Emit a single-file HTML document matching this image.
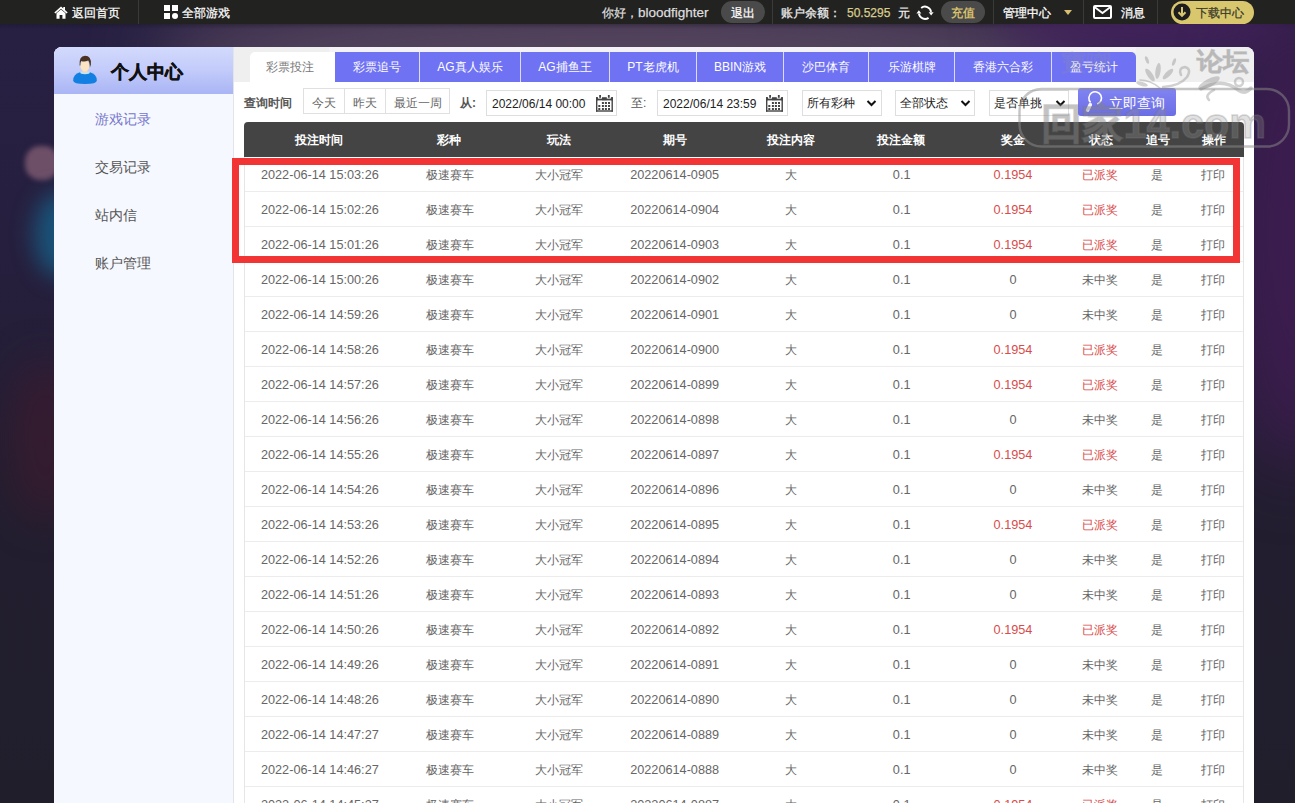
<!DOCTYPE html>
<html><head><meta charset="utf-8">
<style>
*{margin:0;padding:0;box-sizing:border-box}
html,body{width:1295px;height:803px;overflow:hidden}
body{position:relative;font-family:"Liberation Sans",sans-serif;font-size:13px;color:#666;
background:#221e2e;}
.bg{position:absolute;left:0;top:0;width:1295px;height:803px;overflow:hidden;background:linear-gradient(180deg,#272043 0px,#261f3e 250px,#221e30 480px,#211e2c 803px)}
.bg div{position:absolute;border-radius:50%}
.top{position:absolute;left:0;top:0;width:1295px;height:24px;background:#222221;color:#fff;font-size:12px;line-height:26px;white-space:nowrap}
.top span,.top div{position:absolute;-webkit-text-stroke:0.25px currentColor}
.vd{position:absolute;top:0;width:1px;height:24px;background:#3a3a3a}
.pill{position:absolute;top:1px;height:22px;border-radius:11px;background:#4a4a4a;text-align:center;line-height:24px}
.panel{position:absolute;left:54px;top:47px;width:1200px;height:820px;background:#fff;border-radius:8px 8px 0 0;overflow:hidden}
.side{position:absolute;left:0;top:0;width:180px;height:820px;background:#f5f8fe;border-right:1px solid #e2e4ea}
.shead{position:absolute;left:0;top:0;width:179px;height:47px;background:linear-gradient(180deg,#d3dafd 0%,#c2cbfa 50%,#a9b5f5 100%)}
.shead .t{position:absolute;left:57px;top:14px;font-size:18px;font-weight:bold;color:#111;line-height:22px;letter-spacing:0px;-webkit-text-stroke:0.5px #111}
.menu{position:absolute;left:41px;font-size:14px;color:#555;line-height:20px}
.strip{position:absolute;left:180px;top:0;width:1020px;height:35px;background:#efefef}
.tab{position:absolute;top:5px;height:30px;background:#7072f4;color:#fff;text-align:center;line-height:30px;font-size:12px;border-right:1px solid #dcdcf5}
.tab.act{background:#fff;color:#777;border-radius:6px 6px 0 0;border:none}
.q{position:absolute;font-size:12px;line-height:28px}
.btn{position:absolute;top:41px;height:26px;border:1px solid #e0e0e0;background:#fff;color:#666;text-align:center;line-height:29px;font-size:12px}
.inp{position:absolute;top:43px;height:26px;border:1px solid #dedede;background:#fff;color:#222;line-height:26px;padding-left:5px;font-size:12px}
.sel{position:absolute;top:43px;height:26px;border:1px solid #dedede;background:#fff;color:#222;line-height:25px;padding-left:4px;font-size:12px}
.thead{position:absolute;left:190px;top:75px;width:1000px;height:35px;background:#444;border-radius:4px 4px 0 0;color:#fff;font-weight:bold;line-height:36px;font-size:12px}
.tbody{position:absolute;left:190px;top:110px;width:1000px;border-left:1px solid #e6e6e6;border-right:1px solid #e6e6e6}
.tr{height:35px;border-bottom:1px solid #ececec;line-height:36px;display:flex;font-size:12px}
.tr .c1,.tr .c4,.tr .c6,.tr .c7{font-size:12.7px}
.tr div,.thead div{text-align:center;white-space:nowrap}
.thead{display:flex}
.c1{width:150px}.c2{width:110px}.c3{width:110px}.c4{width:121px}.c5{width:111px}.c6{width:110px}.c7{width:113px}.c8{width:63px}.c9{width:51px}.c10{width:61px}
.r{color:#d84c4c}
.tr .c5,.tr .c6,.tr .c7{padding-left:2px}
.redbox{position:absolute;left:232px;top:158px;width:1008px;height:105px;border:7px solid #f23434}
.wm{position:absolute;left:0;top:0;width:1295px;height:803px;pointer-events:none}
</style></head><body>
<div class="bg">
  <div style="left:150px;top:-5px;width:950px;height:120px;background:rgba(105,85,105,0.72);filter:blur(35px)"></div><div style="left:0;top:24px;width:1295px;height:5px;border-radius:0;background:linear-gradient(180deg,rgba(20,18,28,0.35),rgba(20,18,28,0))"></div>
  <div style="left:1000px;top:-30px;width:300px;height:100px;background:rgba(70,35,95,0.8);filter:blur(25px)"></div><div style="left:1235px;top:10px;width:120px;height:460px;background:rgba(64,28,82,0.9);filter:blur(35px)"></div>
  <div style="left:25px;top:146px;width:34px;height:34px;background:#6e4f68;filter:blur(2.5px);border-radius:45%"></div>
  <div style="left:34px;top:192px;width:50px;height:85px;background:rgba(22,100,140,0.75);filter:blur(11px)"></div>
  <div style="left:10px;top:360px;width:70px;height:160px;background:rgba(70,25,45,0.55);filter:blur(20px)"></div>
</div>
<div class="top">
  <svg style="position:absolute;left:54px;top:6px" width="14" height="13" viewBox="0 0 14 13"><path d="M7 0.5 L0.3 6.5 L1.5 7.6 L7 2.8 L12.5 7.6 L13.7 6.5 L11 4.1 V1 H9.3 V2.6 Z" fill="#fff"/><path d="M2.5 7.3 L7 3.4 L11.5 7.3 V12.7 H8.4 V9 H5.6 V12.7 H2.5 Z" fill="#fff"/></svg>
  <span style="left:72px">返回首页</span>
  <div class="vd" style="left:138px"></div>
  <svg style="position:absolute;left:164px;top:5px" width="14" height="14" viewBox="0 0 14 14"><rect x="0" y="0" width="6" height="6" fill="#fff"/><rect x="8" y="0" width="6" height="6" fill="#fff"/><rect x="0" y="8" width="6" height="6" fill="#fff"/><circle cx="11" cy="11" r="3" fill="#fff"/></svg>
  <span style="left:182px">全部游戏</span>
  <span style="left:602px;color:#ddd">你好，<span style="position:static;font-size:13.5px">bloodfighter</span></span>
  <div class="pill" style="left:721px;width:44px;color:#fff">退出</div>
  <div class="vd" style="left:772px"></div>
  <span style="left:781px;color:#eee">账户余额：</span>
  <span style="left:847px;color:#d8cc8c">50.5295</span>
  <span style="left:898px;color:#eee">元</span>
  <svg style="position:absolute;left:915px;top:4px" width="20" height="18" viewBox="0 0 20 18"><path d="M6.18 3.91 A6.2 6.2 0 0 1 16.1 7.9" stroke="#fff" stroke-width="1.9" fill="none"/><path d="M13.7 8.3 L18.6 8.3 L16.15 11.6 Z" fill="#fff"/><path d="M13.56 13.88 A6.2 6.2 0 0 1 3.9 9.7" stroke="#fff" stroke-width="1.9" fill="none"/><path d="M1.45 9.5 L6.35 9.5 L3.9 6.2 Z" fill="#fff"/></svg>
  <div class="pill" style="left:941px;width:44px;color:#e2cf72">充值</div>
  <div class="vd" style="left:993px"></div>
  <span style="left:1003px">管理中心</span>
  <svg style="position:absolute;left:1064px;top:10px" width="8" height="5" viewBox="0 0 8 5"><path d="M0 0 H8 L4 5 Z" fill="#d8c070"/></svg>
  <div class="vd" style="left:1083px"></div>
  <svg style="position:absolute;left:1093px;top:5px" width="19" height="14" viewBox="0 0 19 14"><rect x="1" y="1" width="17" height="12" rx="1" stroke="#fff" stroke-width="2" fill="none"/><path d="M1.5 2 L9.5 8 L17.5 2" stroke="#fff" stroke-width="1.8" fill="none"/></svg>
  <span style="left:1121px">消息</span>
  <div class="vd" style="left:1157px"></div>
  <div class="pill" style="left:1171px;width:83px;background:#d9c76e;top:1px;height:23px;border-radius:12px"></div>
  <svg style="position:absolute;left:1173px;top:3px" width="18" height="18" viewBox="0 0 18 18"><circle cx="9" cy="9" r="8.5" fill="#1e1e1e"/><path d="M9 4 V12.5 M5.5 9.2 L9 12.8 L12.5 9.2" stroke="#d9c76e" stroke-width="2" fill="none"/></svg>
  <span style="left:1196px;color:#3a3a2a">下载中心</span>
</div>

<div class="panel">
  <div class="side">
    <div class="shead">
      <svg style="position:absolute;left:18px;top:8px" width="26" height="30" viewBox="0 0 26 30"><path d="M1.2 25.5 Q1.2 19 8 17.2 L18 17.2 Q24.8 19 24.8 25.5 Q24.8 29 13 29 Q1.2 29 1.2 25.5 Z" fill="#1280e2"/><ellipse cx="13" cy="17.6" rx="4.8" ry="1.6" fill="#bfe6f4"/><rect x="10.6" y="12.5" width="4.8" height="5" fill="#f6d6b0"/><ellipse cx="12.9" cy="11" rx="4.5" ry="5.4" fill="#fbe4c2"/><path d="M7.6 10.5 Q6.8 1 13 0.8 Q19.6 1 18.9 9.5 L17.9 12.5 Q17.6 6.8 16.2 5.6 Q12.5 7.4 9.2 5.9 Q8.3 7.2 8.3 10.5 Z" fill="#4a3322"/></svg>
      <div class="t">个人中心</div>
    </div>
    <div class="menu" style="top:62px;color:#7676cc">游戏记录</div>
    <div class="menu" style="top:110px">交易记录</div>
    <div class="menu" style="top:158px">站内信</div>
    <div class="menu" style="top:206px">账户管理</div>
  </div>
  <div class="strip"></div>
  <div style="position:absolute;left:275px;top:0;width:807px;height:5px;background:#f4f2f7"></div>
  <div class="tab act" style="left:196px;width:85px;padding-right:6px;border-radius:5px 0 0 0">彩票投注</div>
  <div class="tab" style="left:281px;width:85px">彩票追号</div>
  <div class="tab" style="left:366px;width:101px">AG真人娱乐</div>
  <div class="tab" style="left:467px;width:89px">AG捕鱼王</div>
  <div class="tab" style="left:556px;width:87px">PT老虎机</div>
  <div class="tab" style="left:643px;width:87px">BBIN游戏</div>
  <div class="tab" style="left:730px;width:85px">沙巴体育</div>
  <div class="tab" style="left:815px;width:86px">乐游棋牌</div>
  <div class="tab" style="left:901px;width:97px">香港六合彩</div>
  <div class="tab" style="left:998px;width:84px;border-right:none;border-radius:0 5px 0 0">盈亏统计</div>

  <div class="q" style="left:190px;top:42px;font-weight:bold;color:#555">查询时间</div>
  <div class="btn" style="left:249px;width:42px">今天</div>
  <div class="btn" style="left:290px;width:42px">昨天</div>
  <div class="btn" style="left:331px;width:65px">最近一周</div>
  <div class="q" style="left:406px;top:42px;font-weight:bold;color:#555">从:</div>
  <div class="inp" style="left:432px;width:131px">2022/06/14 00:00</div>
  <svg style="position:absolute;left:542px;top:48px" width="17" height="17" viewBox="0 0 17 17"><g fill="#444"><rect x="3.2" y="0" width="1.8" height="2.8"/><rect x="11.9" y="0" width="1.8" height="2.8"/><rect x="0" y="2.2" width="2" height="3"/><rect x="6" y="2.2" width="4.8" height="3"/><rect x="14.9" y="2.2" width="2" height="3"/><rect x="0" y="3.6" width="16.9" height="1.8"/><rect x="0" y="2.2" width="1.4" height="14.5"/><rect x="15.5" y="2.2" width="1.4" height="14.5"/><rect x="0" y="15.3" width="16.9" height="1.4"/><rect x="5.9" y="7" width="2" height="2"/><rect x="8.9" y="7" width="2" height="2"/><rect x="12" y="7" width="2" height="2"/><rect x="2.3" y="10" width="2" height="2"/><rect x="5.9" y="10" width="2" height="2"/><rect x="8.9" y="10" width="2" height="2"/><rect x="12" y="10" width="2" height="2"/><rect x="2.3" y="13" width="2" height="2"/><rect x="5.9" y="13" width="2" height="2"/><rect x="8.9" y="13" width="2" height="2"/><rect x="12" y="13" width="2" height="2"/></g></svg>
  <div class="q" style="left:577px;top:42px;color:#555">至:</div>
  <div class="inp" style="left:603px;width:131px">2022/06/14 23:59</div>
  <svg style="position:absolute;left:712px;top:48px" width="17" height="17" viewBox="0 0 17 17"><g fill="#444"><rect x="3.2" y="0" width="1.8" height="2.8"/><rect x="11.9" y="0" width="1.8" height="2.8"/><rect x="0" y="2.2" width="2" height="3"/><rect x="6" y="2.2" width="4.8" height="3"/><rect x="14.9" y="2.2" width="2" height="3"/><rect x="0" y="3.6" width="16.9" height="1.8"/><rect x="0" y="2.2" width="1.4" height="14.5"/><rect x="15.5" y="2.2" width="1.4" height="14.5"/><rect x="0" y="15.3" width="16.9" height="1.4"/><rect x="5.9" y="7" width="2" height="2"/><rect x="8.9" y="7" width="2" height="2"/><rect x="12" y="7" width="2" height="2"/><rect x="2.3" y="10" width="2" height="2"/><rect x="5.9" y="10" width="2" height="2"/><rect x="8.9" y="10" width="2" height="2"/><rect x="12" y="10" width="2" height="2"/><rect x="2.3" y="13" width="2" height="2"/><rect x="5.9" y="13" width="2" height="2"/><rect x="8.9" y="13" width="2" height="2"/><rect x="12" y="13" width="2" height="2"/></g></svg>
  <div class="sel" style="left:748px;width:80px">所有彩种</div>
  <svg style="position:absolute;left:812px;top:53px" width="11" height="7" viewBox="0 0 11 7"><path d="M1.5 1 L5.5 5 L9.5 1" stroke="#111" stroke-width="2" fill="none"/></svg>
  <div class="sel" style="left:841px;width:80px">全部状态</div>
  <svg style="position:absolute;left:906px;top:53px" width="11" height="7" viewBox="0 0 11 7"><path d="M1.5 1 L5.5 5 L9.5 1" stroke="#111" stroke-width="2" fill="none"/></svg>
  <div class="sel" style="left:935px;width:80px">是否单挑</div>
  <svg style="position:absolute;left:1001px;top:53px" width="11" height="7" viewBox="0 0 11 7"><path d="M1.5 1 L5.5 5 L9.5 1" stroke="#111" stroke-width="2" fill="none"/></svg>
  <div style="position:absolute;left:1024px;top:41px;width:98px;height:28px;border-radius:3px;background:linear-gradient(180deg,#8184f3,#6b6de4);color:#fff;font-size:14px;line-height:31px">
    <svg style="position:absolute;left:0;top:0" width="30" height="28" viewBox="0 0 30 28"><path d="M12.6 14.4 A6.3 6.3 0 1 1 19.2 16" stroke="#fff" stroke-width="1.6" fill="none"/><path d="M12.3 16.6 L9.6 22.2" stroke="#f4f4fa" stroke-width="3.6" stroke-linecap="round"/></svg>
    <span style="position:absolute;left:31px">立即查询</span>
  </div>

  <div class="thead"><div class="c1">投注时间</div><div class="c2">彩种</div><div class="c3">玩法</div><div class="c4">期号</div><div class="c5">投注内容</div><div class="c6">投注金额</div><div class="c7">奖金</div><div class="c8">状态</div><div class="c9">追号</div><div class="c10">操作</div></div>
  <div class="tbody">
<div class="tr"><div class="c1">2022-06-14 15:03:26</div><div class="c2">极速赛车</div><div class="c3">大小冠军</div><div class="c4">20220614-0905</div><div class="c5">大</div><div class="c6">0.1</div><div class="c7"><span class="r">0.1954</span></div><div class="c8"><span class="r">已派奖</span></div><div class="c9">是</div><div class="c10">打印</div></div>
<div class="tr"><div class="c1">2022-06-14 15:02:26</div><div class="c2">极速赛车</div><div class="c3">大小冠军</div><div class="c4">20220614-0904</div><div class="c5">大</div><div class="c6">0.1</div><div class="c7"><span class="r">0.1954</span></div><div class="c8"><span class="r">已派奖</span></div><div class="c9">是</div><div class="c10">打印</div></div>
<div class="tr"><div class="c1">2022-06-14 15:01:26</div><div class="c2">极速赛车</div><div class="c3">大小冠军</div><div class="c4">20220614-0903</div><div class="c5">大</div><div class="c6">0.1</div><div class="c7"><span class="r">0.1954</span></div><div class="c8"><span class="r">已派奖</span></div><div class="c9">是</div><div class="c10">打印</div></div>
<div class="tr"><div class="c1">2022-06-14 15:00:26</div><div class="c2">极速赛车</div><div class="c3">大小冠军</div><div class="c4">20220614-0902</div><div class="c5">大</div><div class="c6">0.1</div><div class="c7">0</div><div class="c8">未中奖</div><div class="c9">是</div><div class="c10">打印</div></div>
<div class="tr"><div class="c1">2022-06-14 14:59:26</div><div class="c2">极速赛车</div><div class="c3">大小冠军</div><div class="c4">20220614-0901</div><div class="c5">大</div><div class="c6">0.1</div><div class="c7">0</div><div class="c8">未中奖</div><div class="c9">是</div><div class="c10">打印</div></div>
<div class="tr"><div class="c1">2022-06-14 14:58:26</div><div class="c2">极速赛车</div><div class="c3">大小冠军</div><div class="c4">20220614-0900</div><div class="c5">大</div><div class="c6">0.1</div><div class="c7"><span class="r">0.1954</span></div><div class="c8"><span class="r">已派奖</span></div><div class="c9">是</div><div class="c10">打印</div></div>
<div class="tr"><div class="c1">2022-06-14 14:57:26</div><div class="c2">极速赛车</div><div class="c3">大小冠军</div><div class="c4">20220614-0899</div><div class="c5">大</div><div class="c6">0.1</div><div class="c7"><span class="r">0.1954</span></div><div class="c8"><span class="r">已派奖</span></div><div class="c9">是</div><div class="c10">打印</div></div>
<div class="tr"><div class="c1">2022-06-14 14:56:26</div><div class="c2">极速赛车</div><div class="c3">大小冠军</div><div class="c4">20220614-0898</div><div class="c5">大</div><div class="c6">0.1</div><div class="c7">0</div><div class="c8">未中奖</div><div class="c9">是</div><div class="c10">打印</div></div>
<div class="tr"><div class="c1">2022-06-14 14:55:26</div><div class="c2">极速赛车</div><div class="c3">大小冠军</div><div class="c4">20220614-0897</div><div class="c5">大</div><div class="c6">0.1</div><div class="c7"><span class="r">0.1954</span></div><div class="c8"><span class="r">已派奖</span></div><div class="c9">是</div><div class="c10">打印</div></div>
<div class="tr"><div class="c1">2022-06-14 14:54:26</div><div class="c2">极速赛车</div><div class="c3">大小冠军</div><div class="c4">20220614-0896</div><div class="c5">大</div><div class="c6">0.1</div><div class="c7">0</div><div class="c8">未中奖</div><div class="c9">是</div><div class="c10">打印</div></div>
<div class="tr"><div class="c1">2022-06-14 14:53:26</div><div class="c2">极速赛车</div><div class="c3">大小冠军</div><div class="c4">20220614-0895</div><div class="c5">大</div><div class="c6">0.1</div><div class="c7"><span class="r">0.1954</span></div><div class="c8"><span class="r">已派奖</span></div><div class="c9">是</div><div class="c10">打印</div></div>
<div class="tr"><div class="c1">2022-06-14 14:52:26</div><div class="c2">极速赛车</div><div class="c3">大小冠军</div><div class="c4">20220614-0894</div><div class="c5">大</div><div class="c6">0.1</div><div class="c7">0</div><div class="c8">未中奖</div><div class="c9">是</div><div class="c10">打印</div></div>
<div class="tr"><div class="c1">2022-06-14 14:51:26</div><div class="c2">极速赛车</div><div class="c3">大小冠军</div><div class="c4">20220614-0893</div><div class="c5">大</div><div class="c6">0.1</div><div class="c7">0</div><div class="c8">未中奖</div><div class="c9">是</div><div class="c10">打印</div></div>
<div class="tr"><div class="c1">2022-06-14 14:50:26</div><div class="c2">极速赛车</div><div class="c3">大小冠军</div><div class="c4">20220614-0892</div><div class="c5">大</div><div class="c6">0.1</div><div class="c7"><span class="r">0.1954</span></div><div class="c8"><span class="r">已派奖</span></div><div class="c9">是</div><div class="c10">打印</div></div>
<div class="tr"><div class="c1">2022-06-14 14:49:26</div><div class="c2">极速赛车</div><div class="c3">大小冠军</div><div class="c4">20220614-0891</div><div class="c5">大</div><div class="c6">0.1</div><div class="c7">0</div><div class="c8">未中奖</div><div class="c9">是</div><div class="c10">打印</div></div>
<div class="tr"><div class="c1">2022-06-14 14:48:26</div><div class="c2">极速赛车</div><div class="c3">大小冠军</div><div class="c4">20220614-0890</div><div class="c5">大</div><div class="c6">0.1</div><div class="c7">0</div><div class="c8">未中奖</div><div class="c9">是</div><div class="c10">打印</div></div>
<div class="tr"><div class="c1">2022-06-14 14:47:27</div><div class="c2">极速赛车</div><div class="c3">大小冠军</div><div class="c4">20220614-0889</div><div class="c5">大</div><div class="c6">0.1</div><div class="c7">0</div><div class="c8">未中奖</div><div class="c9">是</div><div class="c10">打印</div></div>
<div class="tr"><div class="c1">2022-06-14 14:46:27</div><div class="c2">极速赛车</div><div class="c3">大小冠军</div><div class="c4">20220614-0888</div><div class="c5">大</div><div class="c6">0.1</div><div class="c7">0</div><div class="c8">未中奖</div><div class="c9">是</div><div class="c10">打印</div></div>
<div class="tr"><div class="c1">2022-06-14 14:45:27</div><div class="c2">极速赛车</div><div class="c3">大小冠军</div><div class="c4">20220614-0887</div><div class="c5">大</div><div class="c6">0.1</div><div class="c7"><span class="r">0.1954</span></div><div class="c8"><span class="r">已派奖</span></div><div class="c9">是</div><div class="c10">打印</div></div>
  </div>
</div>
<div class="redbox"></div>
<svg class="wm" width="1295" height="803" viewBox="0 0 1295 803">
  <rect x="1019.5" y="89" width="269.5" height="57.5" rx="22" stroke="rgba(140,140,140,0.5)" stroke-width="2.4" fill="none"/>
  <text x="1041" y="137.5" font-family="Liberation Sans" font-weight="bold" font-size="42" textLength="225" lengthAdjust="spacingAndGlyphs" fill="rgba(150,150,150,0.3)" stroke="rgba(120,120,120,0.3)" stroke-width="1.6">回家14.com</text>
  <text x="1197" y="70" font-family="Liberation Sans" font-weight="bold" font-size="25" textLength="52" lengthAdjust="spacingAndGlyphs" fill="rgba(150,150,150,0.4)" stroke="rgba(150,150,150,0.4)" stroke-width="1">论坛</text>
  <text x="1061" y="70" font-family="Liberation Sans" font-weight="bold" font-size="22" textLength="50" lengthAdjust="spacingAndGlyphs" fill="rgba(150,150,150,0.22)">寶嘲</text>
  <g stroke="rgba(140,140,140,0.4)" fill="none" stroke-linecap="round">
    <path d="M1163 87 Q1180 86 1187 77 Q1192 69 1185 67 Q1178 68 1181 75" stroke-width="2.5"/>
    <path d="M1201 89 Q1222 77 1238 90 Q1245 95 1251 88" stroke-width="3.5"/>
    <circle cx="1239" cy="82" r="4" stroke-width="2.5"/>
    <path d="M1214 90 Q1204 95 1209 100" stroke-width="2.5"/>
    <path d="M1160 88 Q1150 80 1140 80" stroke-width="1.5"/>
  </g>
  <g fill="rgba(140,140,140,0.4)">
    <ellipse cx="1150" cy="75" rx="2.6" ry="7.5" transform="rotate(-35 1150 75)"/>
    <ellipse cx="1158" cy="71" rx="2.6" ry="8" transform="rotate(8 1158 71)"/>
    <ellipse cx="1168" cy="74" rx="2.5" ry="7" transform="rotate(45 1168 74)"/>
    <ellipse cx="1142" cy="84" rx="2" ry="6" transform="rotate(-75 1142 84)"/>
    <ellipse cx="1174" cy="62" rx="1.6" ry="4" transform="rotate(20 1174 62)"/>
    <ellipse cx="1147" cy="60" rx="1.6" ry="4" transform="rotate(-20 1147 60)"/>
    <ellipse cx="1209" cy="83" rx="12" ry="4" transform="rotate(-28 1209 83)"/>
  </g>
</svg>
</body></html>
